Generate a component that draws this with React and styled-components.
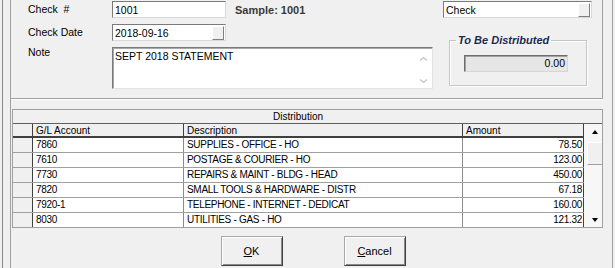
import React from 'react';
import styled, { createGlobalStyle } from 'styled-components';

const GlobalStyle = createGlobalStyle`
  html, body {
    margin: 0;
    padding: 0;
    background: #f0f0f0;
  }
  body {
    font-family: "Liberation Sans", Arial, sans-serif;
    color: #000;
  }
  * { box-sizing: border-box; }
`;

const rows = [
  { account: '7860', description: 'SUPPLIES - OFFICE - HO', amount: '78.50' },
  { account: '7610', description: 'POSTAGE & COURIER - HO', amount: '123.00' },
  { account: '7730', description: 'REPAIRS & MAINT - BLDG - HEAD', amount: '450.00' },
  { account: '7820', description: 'SMALL TOOLS & HARDWARE - DISTR', amount: '67.18' },
  { account: '7920-1', description: 'TELEPHONE - INTERNET - DEDICAT', amount: '160.00' },
  { account: '8030', description: 'UTILITIES - GAS - HO', amount: '121.32' },
];

const Window = styled.div`
  width: 615px;
  height: 268px;
  display: flex;
  overflow: hidden;
  background: #f0f0f0;
`;

const OuterEdge = styled.div`
  margin-left: 2px;
  border-left: 1px solid #8a8a8a;
  flex: 1;
  display: flex;
`;

const Frame = styled.div`
  margin-left: 7px;
  width: 603px;
  border-left: 1px solid #a0a0a0;
  border-right: 1px solid #a0a0a0;
  display: flex;
  flex-direction: column;
`;

const TopPanel = styled.div`
  width: 592px;
  height: 99px;
  padding: 1px 10px 0 17px;
  border-right: 1px solid #a0a0a0;
  border-bottom: 1px solid #a0a0a0;
  box-shadow: 0 1px 0 #fff;
  display: flex;
`;

const Form = styled.div`
  width: 405px;
  display: grid;
  grid-template-columns: 84px 114px 1fr;
  grid-template-rows: 17px 17px 42px;
  row-gap: 6px;
`;

const Label = styled.div`
  font-size: 10.5px;
  line-height: 13px;
  white-space: pre;
  align-self: ${p => (p.top ? 'start' : 'center')};
  margin-top: ${p => (p.top ? '-1px' : '0')};
`;

const Field = styled.div`
  height: 17px;
  background: #fff;
  border: 1px solid;
  border-color: #7a7a7a #d9d9d9 #d9d9d9 #7a7a7a;
  display: flex;
  align-items: center;
  justify-content: space-between;
  padding-left: 2px;
  font-size: 10.5px;
  line-height: 14px;
`;

const DropButton = styled.span`
  width: 12px;
  height: 14px;
  margin-right: 1px;
  background: #f0f0f0;
  border: 1px solid;
  border-color: #fff #808080 #808080 #fff;
`;

const Sample = styled.div`
  font-size: 11px;
  font-weight: bold;
  color: #3a3a3a;
  padding-left: 9px;
  align-self: center;
`;

const NoteBox = styled.div`
  grid-column: 2 / 4;
  height: 42px;
  background: #fff;
  border: 1px solid;
  border-color: #7a7a7a #e3e3e3 #e3e3e3 #7a7a7a;
  box-shadow: inset 1px 1px 0 #a8a8a8;
  display: flex;
`;

const NoteText = styled.div`
  flex: 1;
  padding: 2px 0 0 2px;
  font-size: 10.5px;
  line-height: 13px;
`;

const NoteScroll = styled.div`
  width: 17px;
  display: flex;
  flex-direction: column;
  justify-content: space-between;
  align-items: center;
  padding: 8px 1px 4px 0;
`;

const Chevron = ({ down }) => (
  <svg width="9" height="6" viewBox="0 0 9 6">
    <path
      d={down ? 'M1 1.5 L4.5 4.5 L8 1.5' : 'M1 4.5 L4.5 1.5 L8 4.5'}
      fill="none"
      stroke="#c4c4c4"
      strokeWidth="1.2"
    />
  </svg>
);

const RightColumn = styled.div`
  margin-left: 10px;
  width: 149px;
  display: flex;
  flex-direction: column;
`;

const GroupBox = styled.fieldset`
  margin: 16px 0 0 6px;
  padding: 0;
  width: 138px;
  height: 52px;
  border: 1px solid #c6c6c6;
  box-shadow: inset 1px 1px 0 #fff, 1px 1px 0 #fff;
`;

const GroupTitle = styled.legend`
  margin-left: 6px;
  padding: 0 2px;
  font-size: 11px;
  line-height: 13px;
  font-weight: bold;
  font-style: italic;
  color: #1c2a4c;
`;

const TotalField = styled.div`
  margin: 8px 0 0 14px;
  width: 104px;
  height: 17px;
  background: #e6e6e6;
  border: 1px solid;
  border-color: #6e6e6e #d6d6d6 #d6d6d6 #6e6e6e;
  box-shadow: inset 1px 1px 0 #a0a0a0;
  font-size: 10.5px;
  line-height: 15px;
  text-align: right;
  padding-right: 2px;
`;

const Grid = styled.div`
  margin: 10px 0 0 1px;
  width: 591px;
  border: 1px solid #a0a0a0;
  background: #f0f0f0;
`;

const GridTitle = styled.div`
  height: 14px;
  border-bottom: 1px solid #606060;
  font-size: 10px;
  line-height: 13px;
  text-align: center;
  padding-right: 19px;
`;

const GridBody = styled.div`
  display: flex;
`;

const Table = styled.div`
  width: 571px;
`;

const Row = styled.div`
  display: grid;
  grid-template-columns: 20px 151px 279px 121px;
  height: ${p => (p.header ? '14px' : '15px')};
  border-bottom: ${p => (p.header ? '2px solid #404040' : p.last ? 'none' : '1px solid #a0a0a0')};
  &:last-child { height: 14px; }
`;

const Cell = styled.div`
  border-right: 1px solid ${p => (p.dark ? '#404040' : '#8c8c8c')};
  background: ${p => (p.gray ? '#f0f0f0' : '#fff')};
  font-size: 10px;
  line-height: 14px;
  letter-spacing: ${p => (p.gray ? '0' : '-0.3px')};
  padding: 0 ${p => (p.right ? '1px' : '0')} 0 ${p => (p.right ? '0' : '3px')};
  text-align: ${p => (p.right ? 'right' : 'left')};
  white-space: nowrap;
  overflow: hidden;
`;

const Scrollbar = styled.div`
  width: 18px;
  padding-left: 3px;
  display: flex;
  flex-direction: column;
  background: #f7f7f7;
`;

const ArrowBox = styled.div`
  height: ${p => (p.down ? '14px' : '15px')};
  display: flex;
  align-items: center;
  justify-content: center;
`;

const Triangle = styled.span`
  width: 0;
  height: 0;
  border-left: 3.5px solid transparent;
  border-right: 3.5px solid transparent;
  ${p => (p.down ? 'border-top: 4px solid #000;' : 'border-bottom: 4px solid #000;')}
`;

const Thumb = styled.div`
  margin-top: 3px;
  height: 23px;
  background: #f0f0f0;
  border-top: 1px solid #fff;
  border-left: 1px solid #fff;
  border-bottom: 1px solid #a0a0a0;
`;

const Track = styled.div`
  flex: 1;
`;

const Buttons = styled.div`
  flex: 1;
  display: flex;
  justify-content: center;
  align-items: flex-start;
  gap: 61px;
  padding: 8px 0 0 3px;
`;

const Button = styled.button`
  width: 62px;
  height: 30px;
  background: #f0f0f0;
  border: 1px solid;
  border-color: #a8a8a8 #404040 #404040 #a8a8a8;
  box-shadow: inset 1px 1px 0 #fff, inset -1px -1px 0 #8a8a8a;
  font-family: "Liberation Sans", Arial, sans-serif;
  font-size: 11px;
  color: #000;
  padding: 0;

  u { text-decoration: underline; }
`;

const App = () => (
  <Window>
    <GlobalStyle />
    <OuterEdge>
      <Frame>
        <TopPanel>
          <Form>
            <Label>{'Check  #'}</Label>
            <Field>1001</Field>
            <Sample>Sample: 1001</Sample>

            <Label>Check Date</Label>
            <Field>
              2018-09-16
              <DropButton />
            </Field>
            <div />

            <Label top>Note</Label>
            <NoteBox>
              <NoteText>SEPT 2018 STATEMENT</NoteText>
              <NoteScroll>
                <Chevron />
                <Chevron down />
              </NoteScroll>
            </NoteBox>
          </Form>
          <RightColumn>
            <Field>
              Check
              <DropButton />
            </Field>
            <GroupBox>
              <GroupTitle>To Be Distributed</GroupTitle>
              <TotalField>0.00</TotalField>
            </GroupBox>
          </RightColumn>
        </TopPanel>

        <Grid>
          <GridTitle>Distribution</GridTitle>
          <GridBody>
            <Table>
              <Row header>
                <Cell gray dark />
                <Cell gray dark>G/L Account</Cell>
                <Cell gray dark>Description</Cell>
                <Cell gray dark>Amount</Cell>
              </Row>
              {rows.map((r, i) => (
                <Row key={r.account} last={i === rows.length - 1}>
                  <Cell gray dark />
                  <Cell>{r.account}</Cell>
                  <Cell>{r.description}</Cell>
                  <Cell right dark>{r.amount}</Cell>
                </Row>
              ))}
            </Table>
            <Scrollbar>
              <ArrowBox><Triangle /></ArrowBox>
              <Thumb />
              <Track />
              <ArrowBox down><Triangle down /></ArrowBox>
            </Scrollbar>
          </GridBody>
        </Grid>

        <Buttons>
          <Button><u>O</u>K</Button>
          <Button><u>C</u>ancel</Button>
        </Buttons>
      </Frame>
    </OuterEdge>
  </Window>
);

export default App;
